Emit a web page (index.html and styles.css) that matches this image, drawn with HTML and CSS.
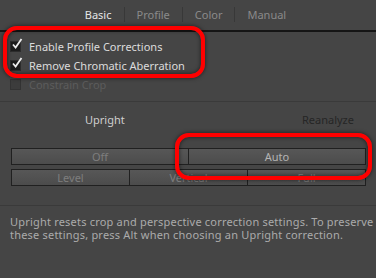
FILE: index.html
```html
<!DOCTYPE html>
<html lang="en">
<head>
    <meta charset="UTF-8">
    <title>Lens Corrections</title>
    <link rel="stylesheet" href="styles.css">
</head>
<body>
    <div class="panel">
        <nav class="tabs">
            <span class="tab active">Basic</span>
            <span class="tab">Profile</span>
            <span class="tab">Color</span>
            <span class="tab">Manual</span>
        </nav>

        <div class="checks">
            <label class="check on"><span class="box"><svg viewBox="0 0 12 12" width="12" height="12"><path d="M2 6.5 L4.6 9.5 L10.5 1" fill="none" stroke="#eeeeee" stroke-width="1.8"/></svg></span>Enable Profile Corrections</label>
            <label class="check on"><span class="box"><svg viewBox="0 0 12 12" width="12" height="12"><path d="M2 6.5 L4.6 9.5 L10.5 1" fill="none" stroke="#eeeeee" stroke-width="1.8"/></svg></span>Remove Chromatic Aberration</label>
            <label class="check off"><span class="box"></span>Constrain Crop</label>
        </div>

        <div class="upright">
            <span class="upright-label">Upright</span>
            <span class="reanalyze">Reanalyze</span>
        </div>

        <div class="buttons">
            <div class="btn-row">
                <button class="btn dim">Off</button>
                <button class="btn">Auto</button>
            </div>
            <div class="btn-row">
                <button class="btn dim">Level</button>
                <button class="btn dim">Vertical</button>
                <button class="btn dim">Full</button>
            </div>
        </div>

        <p class="note">Upright resets crop and perspective correction settings. To preserve these settings, press Alt when choosing an Upright correction.</p>

        <div class="mark mark-checks"></div>
        <div class="mark mark-auto"></div>
    </div>
</body>
</html>
```

FILE: styles.css
```css
body {
    margin: 0;
    background-color: #454545;
    font-family: 'Noto Sans', 'Open Sans', sans-serif;
    font-size: 11px;
}
.panel {
    position: relative;
    height: 278px;
    overflow: hidden;
}
.tabs {
    display: flex;
    justify-content: center;
    padding-right: 5px;
    height: 32px;
    padding-bottom: 1px;
    align-items: center;
    border-bottom: 2px solid #151515;
    box-sizing: border-box;
}
.tab {
    color: #8a8a8a;
    padding: 0 12px;
    border-left: 1px solid #383838;
    line-height: 15px;
}
.tab:first-child {
    border-left: none;
}
.tab.active {
    color: #e6e6e6;
}
.checks {
    padding: 5px 0 7px 10px;
    border-bottom: 1px solid #3a3a3a;
}
.check {
    display: flex;
    align-items: center;
    height: 19px;
    color: #dcdcdc;
}
.check.off {
    color: #5c5c5c;
}
.box {
    position: relative;
    width: 9px;
    height: 9px;
    margin-right: 8px;
    background-color: #1c1c1c;
    border: 1px solid #2c2c2c;
}
.box svg {
    position: absolute;
    left: 0;
    top: -4px;
}
.check.off .box {
    background-color: #3c3c3c;
    border-color: #333333;
}
.upright {
    display: flex;
    justify-content: space-between;
    align-items: center;
    height: 34px;
    padding: 0 22px 0 85px;
}
.upright-label {
    color: #cfcfcf;
}
.reanalyze {
    color: #262626;
}
.buttons {
    padding: 12px 10px 19px 11px;
    border-bottom: 1px solid #3a3a3a;
}
.btn-row {
    display: flex;
    margin-bottom: 4px;
}
.btn-row:last-child {
    margin-bottom: 0;
}
.btn {
    flex: 1;
    height: 17px;
    padding: 0;
    font-family: inherit;
    font-size: 11px;
    color: #b4b4b4;
    background: linear-gradient(#575757, #4c4c4c);
    border: 1px solid #202020;
    border-left-width: 0;
}
.btn:first-child {
    border-left-width: 1px;
}
.btn.dim {
    color: #7e7e7e;
}
.note {
    margin: 0;
    padding: 9px 0 9px 10px;
    color: #ababab;
    line-height: 13px;
    letter-spacing: 0.2px;
}
.mark {
    position: absolute;
    border: 4px solid #ff0000;
    border-radius: 14px;
    box-shadow: 0 0 4px rgba(0, 0, 0, 0.6), inset 0 0 4px rgba(0, 0, 0, 0.6);
}
.mark-checks {
    left: 3px;
    top: 26px;
    width: 194px;
    height: 44px;
}
.mark-auto {
    left: 175px;
    top: 133px;
    width: 189px;
    height: 39px;
}
```
